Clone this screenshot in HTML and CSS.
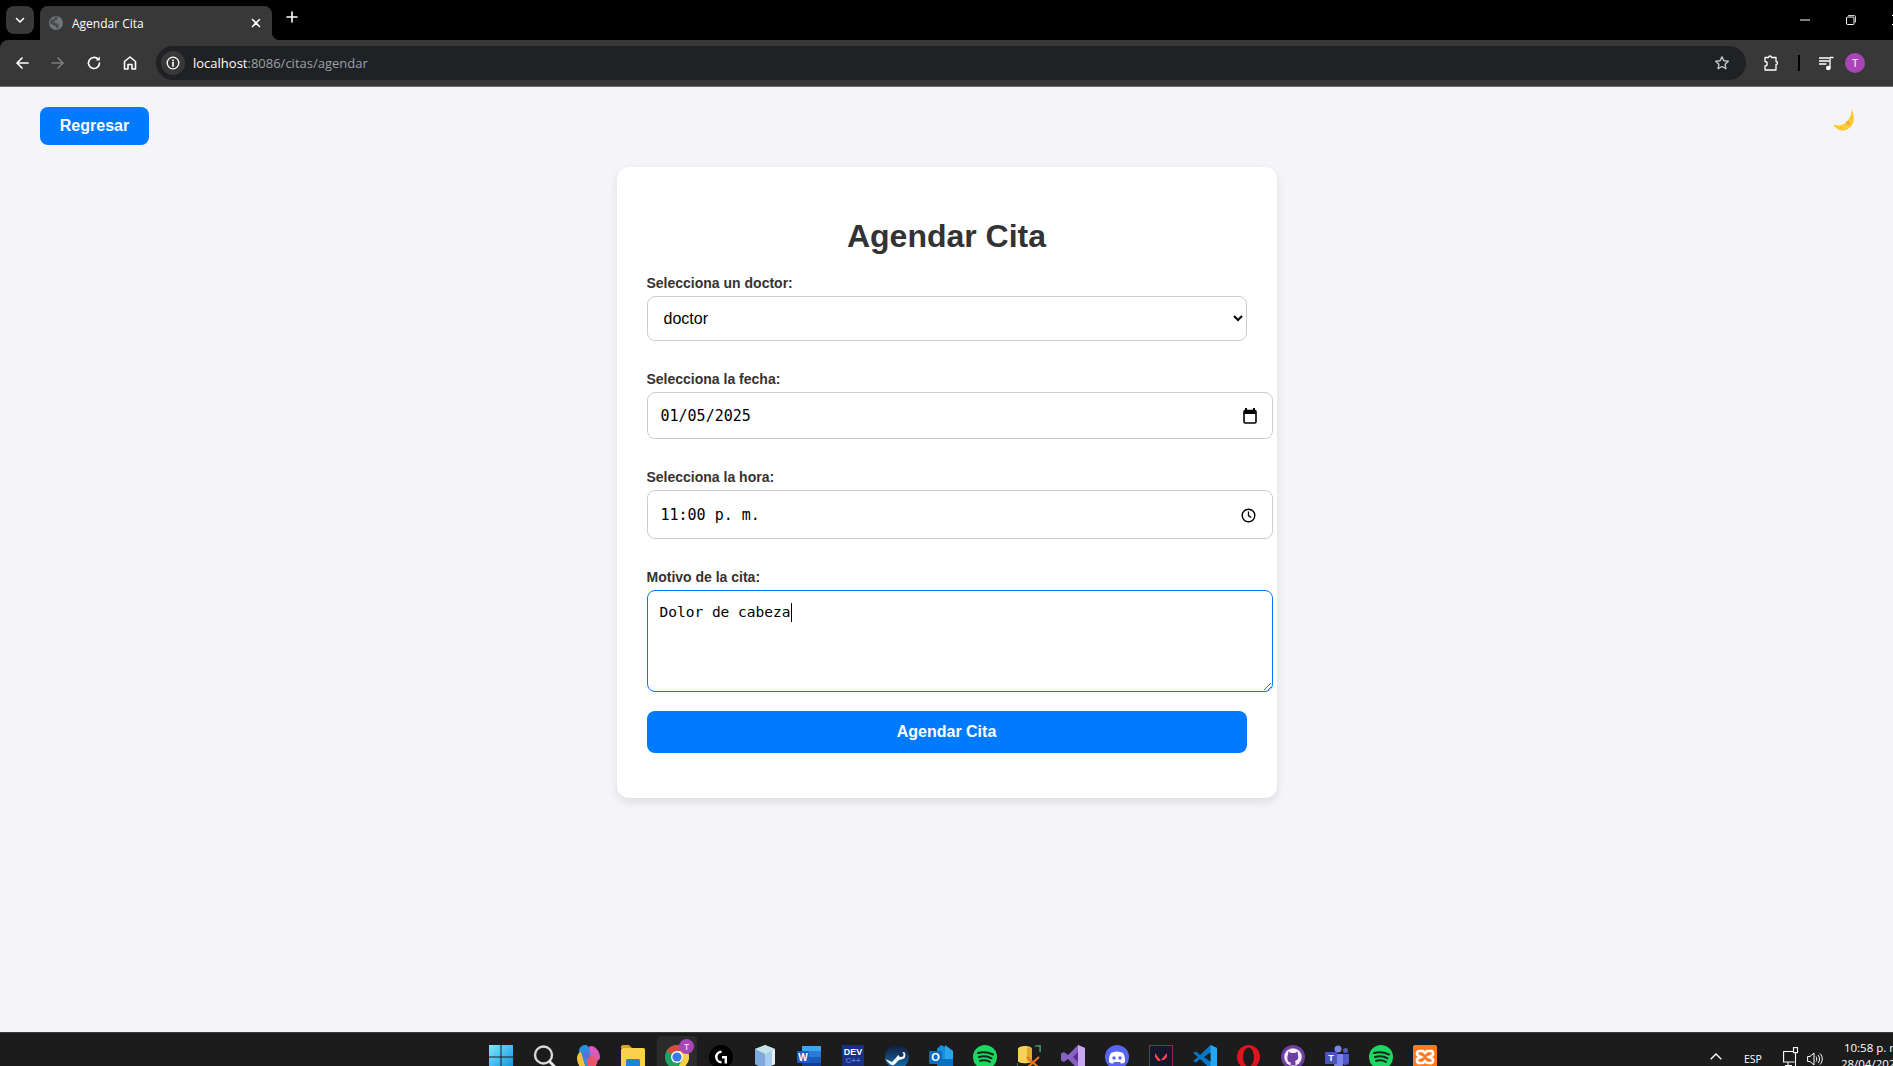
FILE: index.html
```html
<!DOCTYPE html>
<html lang="es">
<head>
<meta charset="utf-8">
<title>Agendar Cita</title>
<link rel="stylesheet" href="styles.css">
</head>
<body>
<header class="browser">
  <div class="tabstrip">
    <button class="tabsearch"><svg width="12" height="12" viewBox="0 0 12 12"><path d="M2.5 4.5 6 8l3.500-3.500" class="st w15"/></svg></button>
    <div class="tab">
      <svg class="favicon" width="14" height="14" viewBox="0 0 14 14"><circle cx="7" cy="7" r="7" fill="#70757a"/><path d="M1.500 4 5 3l1-2.500 3 .5-1 3-3 1 1 2 3 .5 1 3-2 3-1-3-3-1.500L1 7z" fill="#4a4d50"/></svg>
      <span class="tabtitle">Agendar Cita</span>
      <svg class="tabclose" width="10" height="10" viewBox="0 0 10 10"><path d="M1.500 1.500l7 7M8.500 1.500l-7 7" class="st w15"/></svg>
    </div>
    <svg class="newtab" width="12" height="12" viewBox="0 0 12 12"><path d="M6 1v10M1 6h10" class="st w15"/></svg>
    <div class="winctl">
      <span class="winbtn"><svg width="10" height="10" viewBox="0 0 10 10"><path d="M0 5h10" class="st w1"/></svg></span>
      <span class="winbtn"><svg width="10" height="10" viewBox="0 0 10 10"><rect x=".5" y="2" width="7.500" height="7.500" rx="1" class="st w1"/><path d="M2.500 .5H8A1.500 1.500 0 0 1 9.500 2v5" class="st w08"/></svg></span>
      <span class="winbtn"><svg width="10" height="10" viewBox="0 0 10 10"><path d="M0 0l10 10M10 0 0 10" class="st w1"/></svg></span>
    </div>
  </div>
  <div class="toolbar">
    <span class="navbtn"><svg width="16" height="16" viewBox="0 0 16 16"><path d="M14 8H3M8 3 3 8l5 5" class="st w17"/></svg></span>
    <span class="navbtn"><svg width="16" height="16" viewBox="0 0 16 16"><path d="M2 8h11M8 3l5 5-5 5" class="st w17 dim"/></svg></span>
    <span class="navbtn"><svg width="16" height="16" viewBox="0 0 16 16"><path d="M13.500 8A5.500 5.500 0 1 1 12 4.200" class="st w17"/><path d="M13.800 1.500v4h-4z" fill="#fff"/></svg></span>
    <span class="navbtn"><svg width="16" height="16" viewBox="0 0 16 16"><path d="M2.500 14V6.500L8 2l5.500 4.500V14H10V9.500H6V14z" class="st w15"/></svg></span>
    <div class="omnibox">
      <span class="siteinfo"><svg width="14" height="14" viewBox="0 0 14 14"><circle cx="7" cy="7" r="5.800" class="st w13"/><path d="M7 6.200v4" class="st w15"/><circle cx="7" cy="4.200" r=".9" fill="#fff"/></svg></span>
      <span class="url"><span class="host">localhost</span><span class="path">:8086/citas/agendar</span></span>
      <svg class="star" width="16" height="16" viewBox="0 0 16 16"><path d="M8 1.800l1.900 4 4.400.5-3.200 3 .8 4.400L8 11.500l-3.900 2.200.8-4.400-3.200-3 4.400-.5z" fill="none" stroke="#c4c7c5" stroke-width="1.400" stroke-linejoin="round"/></svg>
    </div>
    <span class="ext"><svg width="16" height="16" viewBox="0 0 16 16"><path d="M1 2.500h3.500a1.500 1.500 0 0 1 3 0H12v4a1.500 1.500 0 0 1 0 3V15H1v-4a2 2 0 0 0 0-4.500z" class="st w13"/></svg></span>
    <span class="divider"></span>
    <span class="media"><svg width="16" height="16" viewBox="0 0 16 16"><path d="M0 3h10M0 6h10M0 9h7" class="st w13"/><path d="M11 13V2.500h3" class="st w13"/><circle cx="9.300" cy="13" r="2.300" fill="#fff"/></svg></span>
    <span class="avatar">T</span>
  </div>
</header>

<main class="page">
  <div class="topbar">
    <a class="back" href="#">Regresar</a>
    <svg class="moon" width="22" height="22" viewBox="0 0 22 22"><path d="M18 0C23 7 22 17 13 21 8 23 3 20 0 15.500 4 17 9 16.500 13 13.500 17 10 19 5 18 0Z" fill="#fdcb35"/><circle cx="15" cy="14" r="2.200" fill="#f4b23a"/><circle cx="8" cy="19" r="1" fill="#f4b23a"/><circle cx="18.500" cy="9" r="1" fill="#f4b23a"/></svg>
  </div>
  <form class="card">
    <h1 class="title">Agendar Cita</h1>
    <div class="group">
      <label class="lbl">Selecciona un doctor:</label>
      <select class="select"><option>doctor</option></select>
    </div>
    <div class="group">
      <label class="lbl">Selecciona la fecha:</label>
      <div class="field">
        <input class="input date" type="text" value="01/05/2025">
        <svg class="picker cal" width="14" height="16" viewBox="0 0 14 16"><path d="M3 0v3M11 0v3" stroke="#000" stroke-width="2"/><rect x="1" y="2.500" width="12" height="12.500" rx="1.200" fill="none" stroke="#000" stroke-width="1.600"/><rect x="1" y="2.500" width="12" height="3.500" fill="#000"/></svg>
      </div>
    </div>
    <div class="group">
      <label class="lbl">Selecciona la hora:</label>
      <div class="field">
        <input class="input time" type="text" value="11:00 p. m.">
        <svg class="picker clock" width="15" height="15" viewBox="0 0 15 15"><circle cx="7.500" cy="7.500" r="6.300" fill="none" stroke="#000" stroke-width="1.400"/><path d="M7.500 3.500v4.300l2.800 1.700" fill="none" stroke="#000" stroke-width="1.300"/></svg>
      </div>
    </div>
    <div class="group last">
      <label class="lbl">Motivo de la cita:</label>
      <div class="field">
        <textarea class="area">Dolor de cabeza</textarea>
        <span class="caret"></span>
      </div>
    </div>
    <button class="submit" type="button">Agendar Cita</button>
  </form>
</main>

<footer class="taskbar">
  <div class="apps">
    <span class="app"><svg width="24" height="24" viewBox="0 0 24 24"><defs><linearGradient id="win" x1="0" y1="0" x2="1" y2="1"><stop offset="0" stop-color="#7fe7ff"/><stop offset="1" stop-color="#0f8fe0"/></linearGradient></defs><path d="M0 0h11.500v11.500H0zM12.500 0H24v11.500H12.500zM0 12.500h11.500V24H0zM12.500 12.500H24V24H12.500z" fill="url(#win)"/></svg></span>
    <span class="app"><svg width="24" height="24" viewBox="0 0 24 24"><circle cx="10.500" cy="10" r="8.500" fill="none" stroke="#d8d8d8" stroke-width="2.400"/><path d="M16.500 16.500 23 23" stroke="#e8e8e8" stroke-width="2.800" stroke-linecap="round"/></svg></span>
    <span class="app"><svg width="24" height="24" viewBox="0 0 24 24"><path d="M8 0c3 0 4 2 5 6l3 10c1 4-1 8-5 8-3 0-5-2-6-6L2 9C1 4 4 0 8 0z" fill="#2a8fe0"/><path d="M14 1c-3 0-2 3-1 7l2 7c4 2 8 1 8-3 0-5-4-11-9-11z" fill="#d65bbd"/><path d="M0 13c0-4 3-6 4-6l4 14c-1 2-3 3-4 2-2-2-4-6-4-10z" fill="#f4c23a"/><path d="M10 12c3-2 7-1 9 1 3 3 1 9-4 10-3 .5-6-1-5-11z" fill="#e8556b"/><path d="M8 6c2 0 4 2 5 5 0 1-2 3-4 3-2-1-3-4-3-6 0-1 1-2 2-2z" fill="#5c6fe0"/></svg></span>
    <span class="app"><svg width="24" height="24" viewBox="0 0 24 24"><path d="M0 2a2 2 0 0 1 2-2h6l3 3h-11z" fill="#d9a521"/><rect y="3" width="24" height="21" rx="1.500" fill="#fbcf4f"/><rect x="5" y="14" width="14" height="10" rx="1.500" fill="#1b84d8"/></svg></span>
    <span class="app active"><svg width="24" height="24" viewBox="0 0 24 24"><circle cx="12" cy="12" r="12" fill="#1da462"/><path d="M12 0a12 12 0 0 1 10.400 6H12a6 6 0 0 0-5.200 3L1.600 6A12 12 0 0 1 12 0z" fill="#dd4b3e"/><path d="M22.400 6A12 12 0 0 1 12 24l5.200-9A6 6 0 0 0 16 9l-4-3z" fill="#ffcd46"/><circle cx="12" cy="12" r="6" fill="#fff"/><circle cx="12" cy="12" r="4.600" fill="#3b78e7"/></svg><span class="badge">T</span></span>
    <span class="app"><svg width="24" height="24" viewBox="0 0 24 24"><circle cx="12" cy="12" r="12" fill="#000"/><path d="M12.500 5.500a6.500 6.500 0 1 0 0 13V16a4 4 0 0 1 0-8z" fill="#fff"/><path d="M13 11h5v7.500h-2.400V13.500H13z" fill="#fff"/></svg></span>
    <span class="app"><svg width="24" height="24" viewBox="0 0 24 24"><path d="M12 0l10 4v15l-10 5-10-5V4z" fill="#a9cdee"/><path d="M12 0l10 4-10 5L2 4z" fill="#c5e4ea"/><path d="M2 4l10 5v15L2 19z" fill="#7fa8dc"/><path d="M22 4v15l-3 1.500V6z" fill="#e8eef5"/></svg></span>
    <span class="app"><svg width="24" height="24" viewBox="0 0 24 24"><path d="M5 1h19v5H5z" fill="#41a5ee"/><path d="M5 6h19v6H5z" fill="#2b7cd3"/><path d="M5 12h19v6H5z" fill="#185abd"/><path d="M5 18h19v6H5z" fill="#103f91"/><rect y="6" width="12" height="12" rx="1" fill="#1a5dbd"/><text x="6" y="15.500" class="wordw">W</text></svg></span>
    <span class="app"><svg width="24" height="24" viewBox="0 0 24 24"><rect width="22" height="24" x="1" fill="#1b2f80"/><text x="12" y="10" class="devt">DEV</text><text x="12" y="18" class="devc">C++</text></svg></span>
    <span class="app"><svg width="24" height="24" viewBox="0 0 24 24"><defs><linearGradient id="stm" x1="0" y1="0" x2="0" y2="1"><stop offset="0" stop-color="#101d3c"/><stop offset="1" stop-color="#1270ad"/></linearGradient></defs><circle cx="12" cy="12" r="12" fill="url(#stm)"/><path d="M0 14l7 3 3-3 5-6 4-1c2 1 2 6-1 7l-4 1-4 4c-2 2-4 1-5 0z" fill="#fff"/><circle cx="16" cy="9.500" r="2.500" fill="#17305e"/></svg></span>
    <span class="app"><svg width="24" height="24" viewBox="0 0 24 24"><path d="M12 0l12 6v16H8V4z" fill="#1490df"/><path d="M16 0l8 6v8h-8z" fill="#28a8ea"/><path d="M8 14h16v10H8z" fill="#0a6fbf"/><rect y="6" width="13" height="13" rx="1" fill="#0f6cbd"/><text x="6.500" y="16" class="outl">O</text></svg></span>
    <span class="app"><svg width="24" height="24" viewBox="0 0 24 24"><use href="#spot"/></svg></span>
    <span class="app"><svg width="24" height="24" viewBox="0 0 24 24"><path d="M21 1h3v6M1 23H-.5" fill="none" stroke="#3b9c5a" stroke-width="1.500"/><path d="M18 1h5v6M0 18v5h5" fill="none" stroke="#3c8f58" stroke-width="1.600"/><path d="M1 4c0-4 14-4 14 0v12c0 3-14 3-14 0z" fill="#f7d254"/><path d="M10 4c0-2 5-2 5 0v12c0 2-5 2-5 0z" fill="#e2a92f"/><path d="M10 12l12 11M22 12 10 23" stroke="#e8731c" stroke-width="2.200"/></svg></span>
    <span class="app"><svg width="24" height="24" viewBox="0 0 24 24"><path d="M17 0l7 3v18l-7 3L7 14l-4 3-3-1.500V8.500L3 7l4 3z" fill="#8661c5"/><path d="M17 0l7 3v18l-7 3z" fill="#c9a8ef"/><path d="M17 7v10l-5-5z" fill="#5c2d91"/></svg></span>
    <span class="app"><svg width="24" height="24" viewBox="0 0 24 24"><circle cx="12" cy="12" r="12" fill="#5865f2"/><path d="M6 8c4-2 8-2 12 0 2 3 2 6 2 9-1 1-3 1.500-4 1.500l-1-1.500H9l-1 1.500C7 18.500 5 18 4 17c0-3 0-6 2-9z" fill="#fff"/><circle cx="9" cy="13" r="1.700" fill="#5865f2"/><circle cx="15" cy="13" r="1.700" fill="#5865f2"/></svg></span>
    <span class="app"><svg width="24" height="24" viewBox="0 0 24 24"><rect x=".5" y=".5" width="23" height="23" fill="#14182a" stroke="#8b2d45"/><path d="M6 8l6 8h-3L6 12zM18 8v4l-3 3h-3z" fill="#ff4655"/></svg></span>
    <span class="app"><svg width="24" height="24" viewBox="0 0 24 24"><path d="M17.500 0 24 3v18l-6.500 3L7 14l-4 3.500L0 16l5-4-5-4 3-1.500L7 10z" fill="#0078c8"/><path d="M17.500 0 24 3v18l-6.500 3z" fill="#25a6f0"/><path d="M17.500 7.500 11 12l6.500 4.500z" fill="#1c1c1c"/></svg></span>
    <span class="app"><svg width="24" height="24" viewBox="0 0 24 24"><ellipse cx="11.500" cy="12" rx="11.500" ry="12" fill="#e0131f"/><ellipse cx="11.500" cy="12" rx="5.500" ry="9.500" fill="#1c1c1c"/></svg></span>
    <span class="app"><svg width="24" height="24" viewBox="0 0 24 24"><circle cx="12" cy="12" r="12" fill="#6e3ea0"/><circle cx="12" cy="12" r="8.800" fill="#f2eef7"/><path d="M7.500 6.500 10 8h4l2.500-1.500.5 4c1 3-1 5-3 5.500.5 1 .5 2 .5 4h-5c0-1 0-2 .5-2.500-2 0-3-1-3.500-2.500C6.500 13 6 11 7 10z" fill="#6e3ea0"/></svg></span>
    <span class="app"><svg width="24" height="24" viewBox="0 0 24 24"><circle cx="13" cy="4" r="3.500" fill="#7b83eb"/><circle cx="20.500" cy="5.500" r="2.500" fill="#5059c9"/><path d="M9 9h9v10c0 3-2 5-5 5-3 0-4-2-4-5z" fill="#7b83eb"/><path d="M18 9h6v8c0 2-2 3-4 3l-2-1z" fill="#5059c9"/><rect y="7" width="12" height="12" rx="1" fill="#4b53bc"/><text x="6" y="16.200" class="teamt">T</text></svg></span>
    <span class="app"><svg width="24" height="24" viewBox="0 0 24 24"><g id="spot"><circle cx="12" cy="12" r="12" fill="#1ed760"/><path d="M5 8c5-1.500 10-1 15 1.500M6 12c4-1 9-.8 12.500 1.300M7 15.800c3.500-.8 7-.6 10 1" fill="none" stroke="#16271c" stroke-width="2" stroke-linecap="round"/></g></svg></span>
    <span class="app"><svg width="24" height="24" viewBox="0 0 24 24"><rect width="24" height="24" rx="2" fill="#fb7a24"/><path d="M7 6h3l2 2 2-2h3a2.500 2.500 0 0 1 1 5l-2 1 2 1a2.500 2.500 0 0 1-1 5h-3l-2-2-2 2H7a2.500 2.500 0 0 1-1-5l2-1-2-1a2.500 2.500 0 0 1 1-5z" fill="none" stroke="#fff" stroke-width="2.600"/></svg></span>
  </div>
  <div class="tray">
    <svg class="chev" width="12" height="7" viewBox="0 0 12 7"><path d="M.7 6.300 6 1l5.300 5.300" fill="none" stroke="#fff" stroke-width="1.300"/></svg>
    <span class="lang">ESP</span>
    <svg class="net" width="16" height="23" viewBox="0 0 16 23"><path d="M10 4.500H.6V15h11M5 15v3.500M2 18.500h7" fill="none" stroke="#fff" stroke-width="1.100"/><rect x="10.500" y=".6" width="4" height="5" fill="none" stroke="#fff" stroke-width="1.100"/><path d="M12.500 5.500V20" stroke="#fff" stroke-width="1.100"/></svg>
    <svg class="vol" width="16" height="14" viewBox="0 0 16 14"><path d="M.6 4.500H3L7 1v12L3 9.500H.6z" fill="none" stroke="#fff" stroke-width="1"/><path d="M9 4.500c1 1.500 1 3.500 0 5M11 3c2 2.500 2 5.500 0 8M13 1.500c3 3 3 8 0 11" fill="none" stroke="#fff" stroke-width="1"/></svg>
    <div class="clock-text"><span>10:58 p. m.</span><span class="dt">28/04/2025</span></div>
  </div>
</footer>
</body>
</html>
```

FILE: styles.css
```css
* { box-sizing: border-box; }
html, body { margin: 0; height: 100%; }
body {
  display: flex;
  flex-direction: column;
  height: 1066px;
  overflow: hidden;
  background: #f4f4f9;
  font-family: "Liberation Sans", Arial, sans-serif;
}

.st { fill: none; stroke: #fff; stroke-linecap: round; stroke-linejoin: round; }
.w08 { stroke-width: .8; }
.w1 { stroke-width: 1; stroke-linecap: butt; }
.w13 { stroke-width: 1.3; }
.w15 { stroke-width: 1.6; }
.w17 { stroke-width: 1.7; }
.dim { stroke: #7b7b7b; }

/* browser chrome */
.browser { flex: none; background: #000; }
.tabstrip {
  display: flex;
  align-items: flex-start;
  height: 40px;
  padding: 6px 0 0 6px;
  overflow: hidden;
}
.tabsearch {
  display: flex;
  align-items: center;
  justify-content: center;
  width: 28px;
  height: 28px;
  padding: 0;
  border: 0;
  border-radius: 8px;
  background: #383838;
}
.tab {
  position: relative;
  display: flex;
  align-items: center;
  width: 232px;
  height: 34px;
  margin-left: 6px;
  padding: 0 11px 0 9px;
  border-radius: 8px 8px 0 0;
  background: #383838;
}
.tab::after {
  content: "";
  position: absolute;
  right: -8px;
  bottom: 0;
  width: 8px;
  height: 8px;
  background: radial-gradient(circle at 100% 0, transparent 8px, #383838 8.5px);
}
.tabtitle {
  flex: 1;
  margin-left: 9px;
  color: #fff;
  font: 12px "Open Sans", "Noto Sans", sans-serif;
}
.newtab { margin: 5px 0 0 14px; }
.winctl { display: flex; margin-left: auto; margin-right: -27px; margin-top: -6px; }
.winbtn { display: flex; align-items: center; justify-content: center; width: 46px; height: 40px; }

.toolbar {
  display: flex;
  align-items: center;
  height: 47px;
  padding: 0 0 1px 4px;
  border-bottom: 1px solid #6e6e6e;
  border-radius: 8px 0 0 0;
  background: #383838;
}
.navbtn { display: flex; justify-content: center; width: 36px; }
.omnibox {
  display: flex;
  align-items: center;
  width: 1590px;
  height: 34px;
  margin-left: 8px;
  padding: 0 16px 0 5px;
  border-radius: 17px;
  background: #202124;
}
.siteinfo {
  display: flex;
  align-items: center;
  justify-content: center;
  width: 24px;
  height: 24px;
  border-radius: 50%;
  background: #383838;
}
.url { flex: 1; margin-left: 8px; font: 13px "Open Sans", "Noto Sans", sans-serif; }
.host { color: #fff; }
.path { color: #9aa0a6; }
.ext { display: flex; margin-left: 18px; }
.divider { width: 2px; height: 16px; margin-left: 18px; background: #000; }
.media { display: flex; margin-left: 19px; }
.avatar {
  display: flex;
  align-items: center;
  justify-content: center;
  width: 20px;
  height: 20px;
  margin-left: 10px;
  border-radius: 50%;
  background: #a846b8;
  color: #f0d8f5;
  font: 600 11px "Open Sans", sans-serif;
}

/* page */
.page { flex: 1; min-height: 0; }
.topbar {
  display: flex;
  align-items: flex-start;
  justify-content: space-between;
  padding: 20px 38px 0 40px;
}
.back {
  width: 109px;
  height: 38px;
  border-radius: 8px;
  background: #007bff;
  color: #fff;
  font-size: 16px;
  font-weight: 700;
  line-height: 38px;
  text-align: center;
  text-decoration: none;
}
.moon { margin-top: 2px; }
.card {
  width: 660px;
  height: 631px;
  margin: 22px auto 0;
  padding: 48px 30px 0;
  border-radius: 12px;
  background: #fff;
  box-shadow: 0 4px 10px rgba(0, 0, 0, .1);
}
.title {
  margin: 0 0 18px;
  color: #333;
  font-size: 32px;
  font-weight: 700;
  line-height: 42px;
  text-align: center;
}
.group { margin-bottom: 30px; }
.group.last { margin-bottom: 19px; }
.lbl {
  display: block;
  margin-bottom: 5px;
  color: #333;
  font-size: 14px;
  font-weight: 700;
  line-height: 16px;
}
.select {
  display: block;
  width: 600px;
  height: 45px;
  padding: 0 0 0 12px;
  border: 1px solid #ccc;
  border-radius: 8px;
  background: #fff;
  color: #000;
  font: 16px "Liberation Sans", Arial, sans-serif;
}
.field { position: relative; width: 626px; }
.input {
  display: block;
  width: 100%;
  padding: 0 0 0 13px;
  border: 1px solid #ccc;
  border-radius: 8px;
  background: #fff;
  color: #000;
  font: 15px "DejaVu Sans Mono", monospace;
  outline: 0;
}
.date { height: 47px; }
.time { height: 49px; }
.picker { position: absolute; }
.cal { top: 16px; right: 16px; }
.clock { top: 18px; right: 17px; }
.area {
  display: block;
  width: 100%;
  height: 102px;
  padding: 11px 12px;
  border: 1px solid #007bff;
  border-radius: 8px;
  background: #fff;
  color: #000;
  font: 14.500px/20px "DejaVu Sans Mono", monospace;
  outline: 0;
}
.caret {
  position: absolute;
  top: 13px;
  left: 144px;
  width: 1px;
  height: 19px;
  background: #000;
}
.submit {
  display: block;
  width: 600px;
  height: 42px;
  padding: 0;
  border: 0;
  border-radius: 8px;
  background: #007bff;
  color: #fff;
  font: 700 16px "Liberation Sans", Arial, sans-serif;
}

/* taskbar */
.taskbar {
  flex: none;
  display: flex;
  height: 34px;
  overflow: hidden;
  border-top: 1px solid #3a3a3a;
  background: #1c1c1c;
}
.apps { display: flex; flex: none; padding-left: 479px; }
.app {
  position: relative;
  flex: none;
  width: 40px;
  height: 40px;
  margin: 3px 2px 0;
  padding: 9px 8px 0;
  border-radius: 4px;
}
.app svg { display: block; overflow: hidden; }
.app.active { background: #2b2b2b; }
.badge {
  position: absolute;
  top: 3px;
  right: 3px;
  width: 15px;
  height: 15px;
  border-radius: 50%;
  background: #a846b8;
  color: #f0d8f5;
  font: 600 9px/15px "Open Sans", sans-serif;
  text-align: center;
}
.wordw, .outl, .teamt, .devt, .devc { text-anchor: middle; font-family: "Liberation Sans", sans-serif; font-weight: 700; fill: #fff; }
.wordw { font-size: 10px; }
.outl { font-size: 11px; }
.teamt { font-size: 9px; }
.devt { font-size: 9px; }
.devc { font-size: 8px; fill: #4a7be0; }

.tray { display: flex; flex: none; align-items: flex-start; margin-left: 263px; color: #fff; }
.chev { margin: 20px 0 0 0; }
.lang { margin: 20px 0 0 22px; font: 10.500px/13px "Open Sans", sans-serif; }
.net { margin: 14px 0 0 21px; }
.vol { margin: 19px 0 0 8px; }
.clock-text {
  display: flex;
  flex-direction: column;
  margin: 7px 0 0 18px;
  font: 11.500px/16px "Open Sans", sans-serif;
  white-space: nowrap;
  text-align: right;
}
.clock-text span { padding-left: 3px; text-align: left; }
.clock-text .dt { padding-left: 0; }
```
